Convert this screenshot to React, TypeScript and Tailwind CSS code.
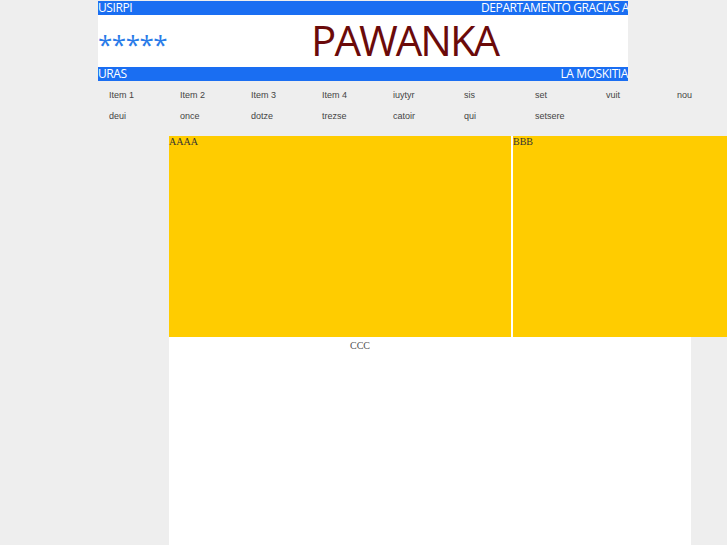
export default function App() {
  const row1 = ["Item 1", "Item 2", "Item 3", "Item 4", "iuytyr", "sis", "set", "vuit", "nou"];
  const row2 = ["deui", "once", "dotze", "trezse", "catoir", "qui", "setsere"];

  return (
    <div className="w-[727px] h-[545px] overflow-hidden bg-[#eeeeee]">

      {/* HEADER BANNER */}
      <div className="ml-[98px] w-[530px] pt-[1px] font-['Open_Sans',sans-serif]">
        <div className="h-[14px] bg-[#1a6ef2] text-white text-[12px] leading-[14px] flex whitespace-nowrap tracking-[-0.4px]">
          <span className="w-[383px] shrink-0">USIRPI</span>
          <span className="flex-1 min-w-0 overflow-hidden">DEPARTAMENTO GRACIAS A DIOS</span>
        </div>
        <div className="h-[52px] bg-white flex items-center">
          <span className="text-[#2a7be8] text-[26px] leading-none pt-[5px] tracking-[-0.5px]">*****</span>
          <span className="ml-[144px] text-[#6b0a0a] text-[42px] leading-none tracking-[-2px] pb-[2px]">PAWANKA</span>
        </div>
        <div className="h-[14px] bg-[#1a6ef2] text-white text-[12px] leading-[14px] flex justify-between whitespace-nowrap tracking-[-0.4px]">
          <span>URAS</span>
          <span>LA MOSKITIA</span>
        </div>
      </div>

      {/* MENU */}
      <div className="ml-[98px] pt-[4px] pb-[9px] font-['Liberation_Sans',Arial,sans-serif] text-[9px] text-[#444444]">
        <div className="flex h-[21px] items-center">
          {row1.map((t) => (
            <span key={t} className="w-[71px] shrink-0 pl-[11px]">{t}</span>
          ))}
        </div>
        <div className="flex h-[21px] items-center">
          {row2.map((t) => (
            <span key={t} className="w-[71px] shrink-0 pl-[11px]">{t}</span>
          ))}
        </div>
      </div>

      {/* CONTENT */}
      <div className="ml-[169px] w-[522px] h-[420px] bg-white font-['Liberation_Serif',serif] text-[10px]">
        <div className="flex gap-[2px] h-[201px]">
          <div className="w-[342px] shrink-0 bg-[#ffcc00] text-[#333333] leading-[12px]">AAAA</div>
          <div className="w-[342px] shrink-0 bg-[#ffcc00] text-[#333333] leading-[12px]">BBB</div>
        </div>
        <div className="pl-[181px] pt-[1px] text-[#555555]">CCC</div>
      </div>

    </div>
  );
}
